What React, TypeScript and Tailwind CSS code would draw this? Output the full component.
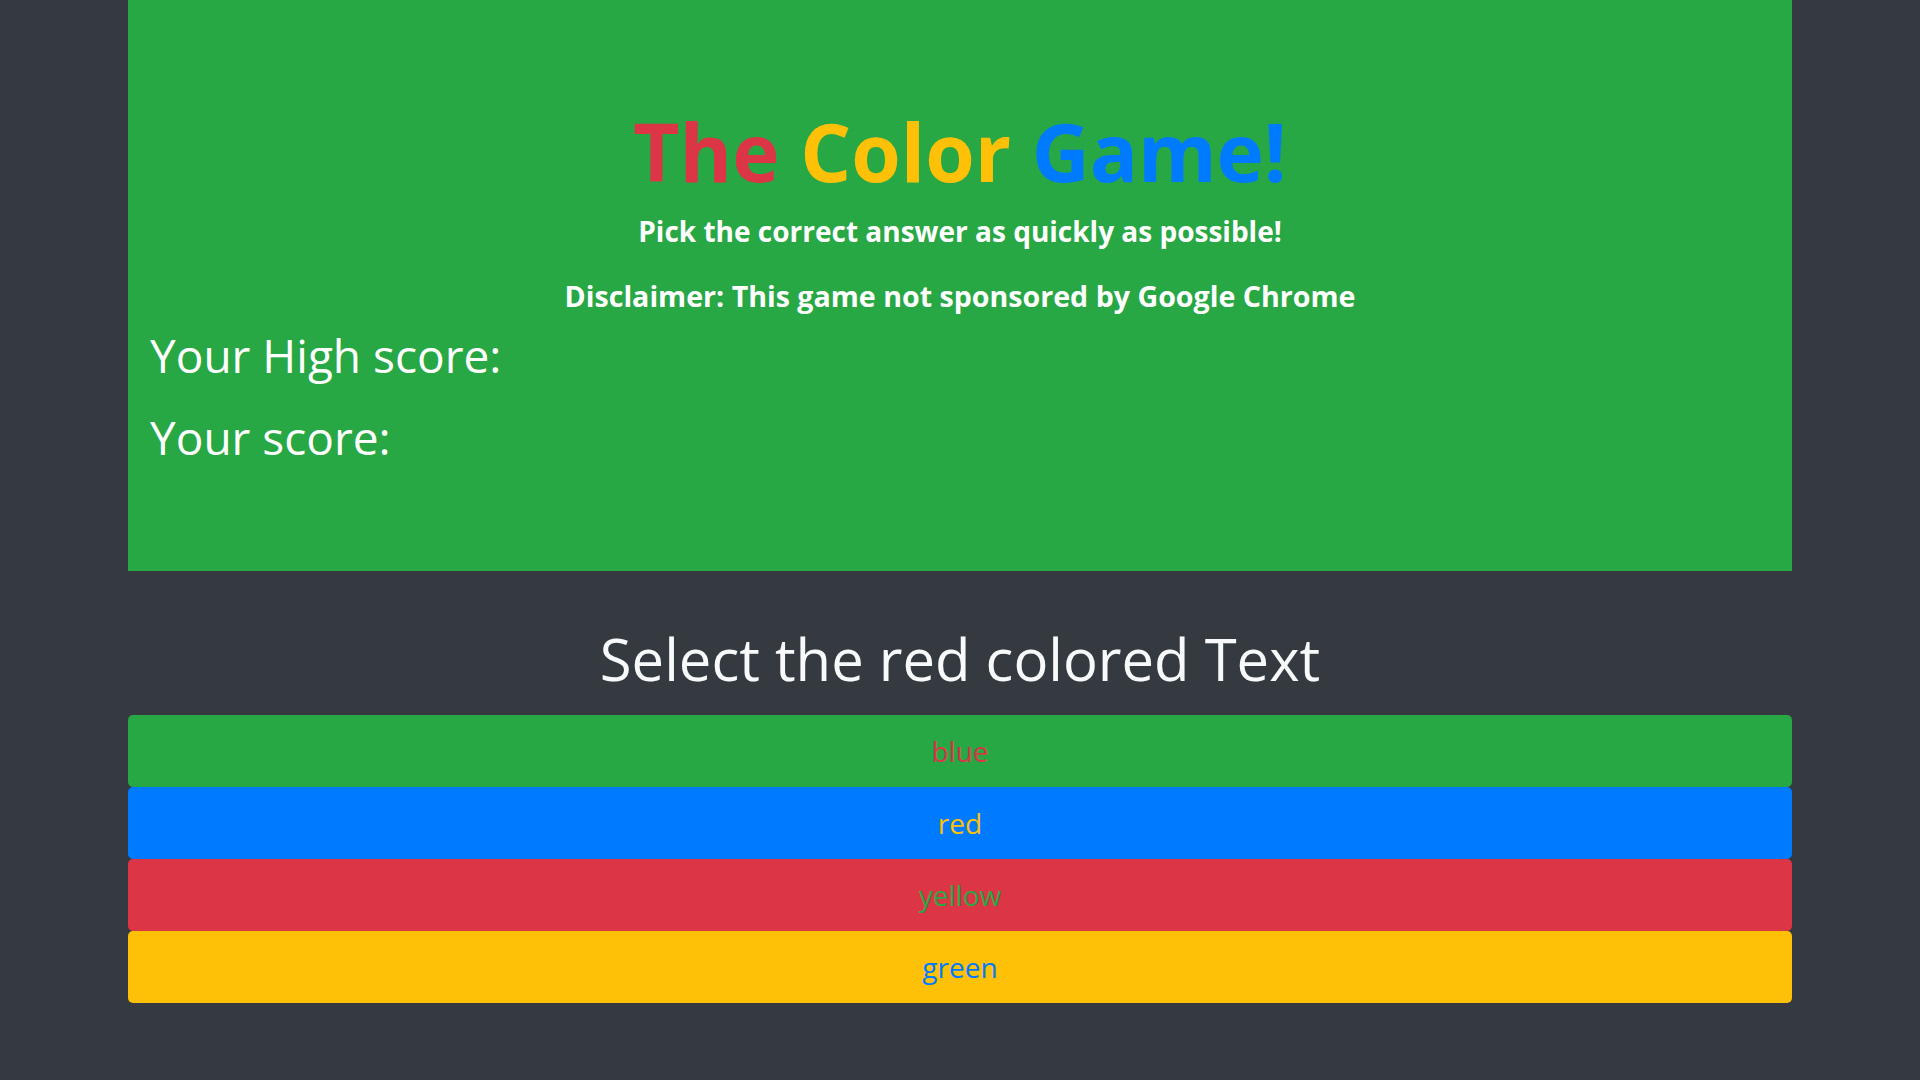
const answers = [
    { label: "blue", bg: "bg-[#28a745]", text: "text-[#dc3545]" },
    { label: "red", bg: "bg-[#007bff]", text: "text-[#ffc107]" },
    { label: "yellow", bg: "bg-[#dc3545]", text: "text-[#28a745]" },
    { label: "green", bg: "bg-[#ffc107]", text: "text-[#007bff]" },
];

const App = () => {
    return (
        <div className="min-h-screen bg-[#343a40] font-['Open_Sans',sans-serif]">
            <div className="mx-auto w-[1664px]">

                {/* header */}
                <div className="h-[571px] bg-[#28a745] px-[22px] text-white">
                    <h1 className="pt-[111px] text-center text-[80px] leading-none font-bold">
                        <span className="text-[#dc3545]">The</span>{" "}
                        <span className="text-[#ffc107]">Color</span>{" "}
                        <span className="text-[#007bff]">Game!</span>
                    </h1>
                    <h3 className="mt-[26px] text-center text-[28px] leading-none font-bold">
                        Pick the correct answer as quickly as possible!
                    </h3>
                    <h3 className="mt-[37px] text-center text-[28.6px] leading-none font-bold">
                        Disclaimer: This game not sponsored by Google Chrome
                    </h3>
                    <h2 className="mt-[21px] text-[46px] leading-none font-medium">Your High score:</h2>
                    <h2 className="mt-[36px] text-[46px] leading-none font-medium">Your score:</h2>
                </div>

                <h2 className="mt-[59px] text-center text-[58px] leading-none font-medium text-[#f8f9fa]">
                    Select the red colored Text
                </h2>

                <div className="mt-[27px] flex flex-col">
                    {answers.map(a => (
                        <button
                            key={a.label}
                            className={`h-[72px] w-full rounded-[5px] text-[28px] ${a.bg} ${a.text}`}
                        >
                            {a.label}
                        </button>
                    ))}
                </div>
            </div>
        </div>
    );
};

export default App
